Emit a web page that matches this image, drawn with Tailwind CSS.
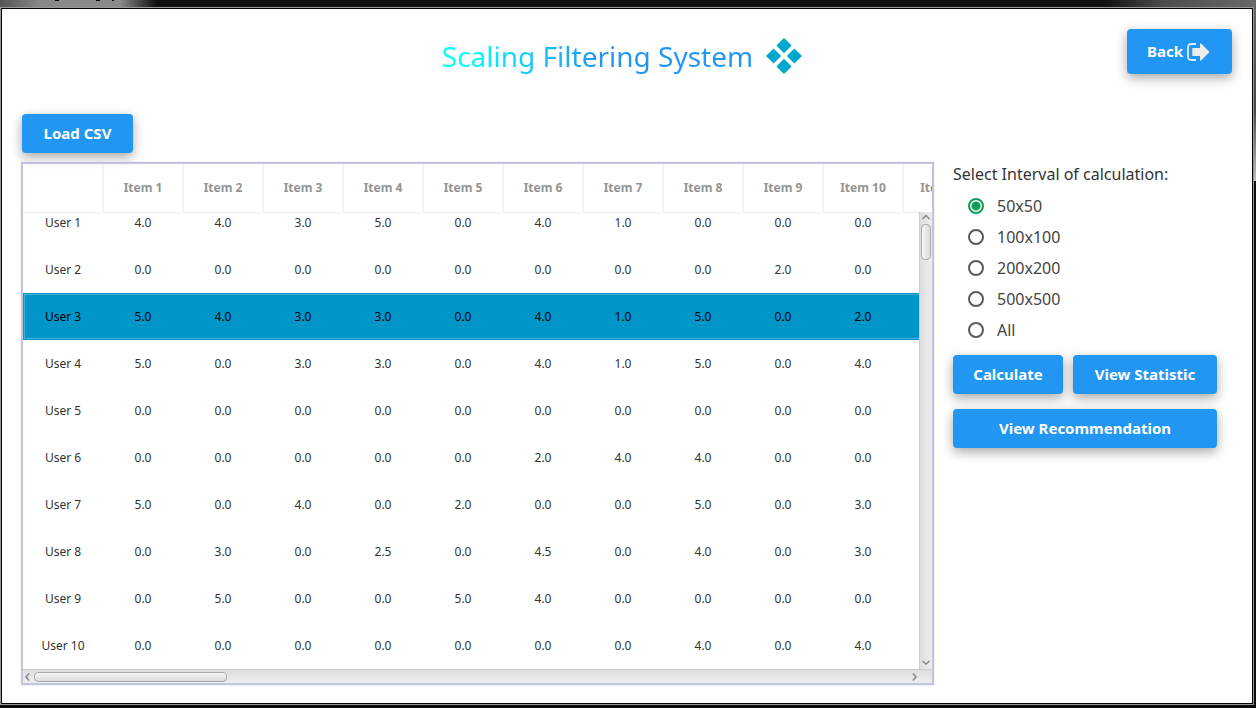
<!DOCTYPE html>
<html lang="en">
<head>
<meta charset="utf-8">
<meta name="viewport" content="width=device-width, initial-scale=1">
<title>Scaling Filtering System</title>
<script src="https://cdn.jsdelivr.net/npm/@tailwindcss/browser@4"></script>
</head>
<body class="font-['Noto_Sans',sans-serif] text-[#333]">
<div class="relative flex min-h-screen flex-col bg-[#0c0c0c] pr-[2px] pb-[3px]">
  <!-- window title strip and right edge -->
  <div class="h-[7px] shrink-0 bg-[linear-gradient(90deg,#555_0,#888_40px,#8a8a8a_120px,#111_156px,#111_calc(100%-150px),#4c4c4c_calc(100%-90px),#686868_100%)]">
    <svg class="block h-[2px] w-[120px]" viewBox="0 0 120 2" fill="#0a0a14" aria-hidden="true"><rect x="55" width="4" height="1"/><rect x="96" width="4" height="1"/><rect x="112" width="2" height="1"/></svg>
  </div>
  <div class="absolute top-0 right-0 h-[181px] w-[2px] bg-[linear-gradient(#686868,#444_60%,#c0c0c0)]"></div>

  <div class="flex flex-1 flex-col border border-[#999]">
  <div class="flex-1 border border-black bg-white px-5 pt-5">
    <header class="grid grid-cols-[1fr_auto_1fr] items-start">
      <h1 class="col-start-2 mt-[7px] flex items-center gap-[13px] pr-2.5 text-[28px] leading-10">
        <span class="bg-[linear-gradient(90deg,#00ffff_0,#00ffff_8%,#2196f3_50%)] bg-clip-text text-transparent">Scaling Filtering System</span>
        <svg class="h-9 w-9" viewBox="0 0 36 36" fill="#00a8cf" aria-hidden="true"><path d="M18 0l7.600 7.600-7.600 7.600-7.600-7.600zM18 20.800l7.600 7.600-7.600 7.600-7.600-7.600zM7.600 10.400l7.600 7.600-7.600 7.600-7.600-7.600zM28.400 10.400l7.600 7.600-7.600 7.600-7.600-7.600z"/></svg>
      </h1>
      <button type="button" class="flex h-[45px] items-center gap-1 justify-self-end rounded bg-[#2196f3] pr-[21px] pl-5 text-[15px] font-bold text-white shadow-[0_4px_12px_rgba(0,0,0,0.35)]">Back
        <svg class="h-[18px] w-6" viewBox="0 0 24 18" aria-hidden="true"><path d="M9 1H4.500Q1 1 1 4.500v9Q1 17 4.500 17H9" fill="none" stroke="#dcecf8" stroke-width="1.800"/><path d="M6 5h7V1q0-1 1-.5l8.500 8.500-8.500 8.500q-1 .5-1-.5v-4H6q-.7 0-.7-.7V5.700Q5.300 5 6 5z" fill="#ececec"/></svg>
      </button>
    </header>

    <button type="button" class="mt-[38px] block h-[39px] w-[111px] rounded bg-[#2196f3] text-[15px] font-bold text-white shadow-[0_4px_12px_rgba(0,0,0,0.35)]">Load CSV</button>

    <main class="mt-[9px] flex items-start gap-[19px]">
      <section class="-ml-px min-w-0 flex-1 border-2 border-[#c0c4dc] shadow-[0_0_1px_#b8bcdc]" aria-label="Ratings">
        <div class="relative overflow-hidden">
          <table class="w-[880px] table-fixed border-collapse text-center text-xs">
            <thead><tr id="head" class="h-12 border-b border-[#eee] text-[#949494]"></tr></thead>
            <tbody id="rows"></tbody>
          </table>
          <div class="absolute top-12 right-0 bottom-0 flex w-[13px] flex-col items-center justify-between border-l border-[#ccc] bg-linear-to-r from-[#dedede] to-[#eee]">
            <svg class="h-3 w-3" viewBox="0 0 12 12" fill="none" stroke="#888" stroke-width="1.500" aria-hidden="true"><path d="M2.500 7L6 3.500 9.500 7"/></svg>
            <div class="mb-auto h-9 w-2.5 rounded-sm border border-[#aaa] bg-linear-to-r from-[#f6f6f6] to-[#dcdcdc]"></div>
            <svg class="h-3 w-3" viewBox="0 0 12 12" fill="none" stroke="#888" stroke-width="1.500" aria-hidden="true"><path d="M2.500 4L6 7l3.500-3"/></svg>
          </div>
        </div>
        <div class="flex h-[14px] items-center border-t border-[#ccc] bg-linear-to-b from-[#dedede] to-[#eee] pr-3">
          <svg class="h-3 w-[11px]" viewBox="0 0 11 12" fill="none" stroke="#888" stroke-width="1.500" aria-hidden="true"><path d="M6 2.500L3 6l3 3.500"/></svg>
          <div class="mr-auto h-2.5 w-[193px] rounded-sm border border-[#aaa] bg-linear-to-b from-[#f6f6f6] to-[#dcdcdc]"></div>
          <svg class="h-3 w-[11px]" viewBox="0 0 11 12" fill="none" stroke="#888" stroke-width="1.500" aria-hidden="true"><path d="M4 2.500L7 6l-3 3.500"/></svg>
        </div>
      </section>

      <aside class="w-[279px] shrink-0 pr-[15px]">
        <fieldset class="text-[16px]">
          <legend class="h-7 leading-6">Select Interval of calculation:</legend>
          <div class="ml-[15px] text-[#444]">
            <label class="flex h-[31px] items-center gap-[13px]"><input type="radio" name="n" checked class="h-4 w-4 appearance-none rounded-full border-2 border-[#5a5a5a] checked:border-[#0f9d58] checked:bg-[radial-gradient(#0f9d58_4px,white_5px)]">50x50</label>
            <label class="flex h-[31px] items-center gap-[13px]"><input type="radio" name="n" class="h-4 w-4 appearance-none rounded-full border-2 border-[#5a5a5a] checked:border-[#0f9d58] checked:bg-[radial-gradient(#0f9d58_4px,white_5px)]">100x100</label>
            <label class="flex h-[31px] items-center gap-[13px]"><input type="radio" name="n" class="h-4 w-4 appearance-none rounded-full border-2 border-[#5a5a5a] checked:border-[#0f9d58] checked:bg-[radial-gradient(#0f9d58_4px,white_5px)]">200x200</label>
            <label class="flex h-[31px] items-center gap-[13px]"><input type="radio" name="n" class="h-4 w-4 appearance-none rounded-full border-2 border-[#5a5a5a] checked:border-[#0f9d58] checked:bg-[radial-gradient(#0f9d58_4px,white_5px)]">500x500</label>
            <label class="flex h-[31px] items-center gap-[13px]"><input type="radio" name="n" class="h-4 w-4 appearance-none rounded-full border-2 border-[#5a5a5a] checked:border-[#0f9d58] checked:bg-[radial-gradient(#0f9d58_4px,white_5px)]">All</label>
          </div>
        </fieldset>
        <div class="mt-[10px] grid grid-cols-[110fr_144fr] gap-x-[10px] gap-y-[15px] text-[15px] font-bold text-white">
          <button type="button" class="h-[39px] rounded bg-[#2196f3] shadow-[0_4px_12px_rgba(0,0,0,0.35)]">Calculate</button>
          <button type="button" class="h-[39px] rounded bg-[#2196f3] shadow-[0_4px_12px_rgba(0,0,0,0.35)]">View Statistic</button>
          <button type="button" class="col-span-2 h-[39px] rounded bg-[#2196f3] shadow-[0_4px_12px_rgba(0,0,0,0.35)]">View Recommendation</button>
        </div>
      </aside>
    </main>
  </div>
  </div>
</div>
<script>
const ratings = [
  "4.0 4.0 3.0 5.0 0.0 4.0 1.0 0.0 0.0 0.0",
  "0.0 0.0 0.0 0.0 0.0 0.0 0.0 0.0 2.0 0.0",
  "5.0 4.0 3.0 3.0 0.0 4.0 1.0 5.0 0.0 2.0",
  "5.0 0.0 3.0 3.0 0.0 4.0 1.0 5.0 0.0 4.0",
  "0.0 0.0 0.0 0.0 0.0 0.0 0.0 0.0 0.0 0.0",
  "0.0 0.0 0.0 0.0 0.0 2.0 4.0 4.0 0.0 0.0",
  "5.0 0.0 4.0 0.0 2.0 0.0 0.0 5.0 0.0 3.0",
  "0.0 3.0 0.0 2.5 0.0 4.5 0.0 4.0 0.0 3.0",
  "0.0 5.0 0.0 0.0 5.0 4.0 0.0 0.0 0.0 0.0",
  "0.0 0.0 0.0 0.0 0.0 0.0 0.0 4.0 0.0 4.0"
];
const selected = 2;
let head = '<td class="w-20 border-r-2 border-[#f2f2f2]"></td>';
for (let i = 1; i <= 11; i++) head += `<th scope="col" class="w-20 border-r-2 border-[#f2f2f2] font-bold">Item ${i}</th>`;
document.getElementById('head').innerHTML = head;
document.getElementById('rows').innerHTML = ratings.map((line, r) => {
  // the first row is partly scrolled under the header
  const row = r === 0 ? 'h-[34px]' : r === selected ? 'h-[47px] bg-[#0096c9] text-black outline outline-[#3fb0d8] -outline-offset-2' : 'h-[47px]';
  const cell = r === 0 ? 'pb-3' : '';
  return `<tr class="${row}"><th scope="row" class="font-normal ${cell}">User ${r + 1}</th>` +
    line.split(' ').map(v => `<td class="${cell}">${v}</td>`).join('') + '<td></td></tr>';
}).join('');
</script>
</body>
</html>
